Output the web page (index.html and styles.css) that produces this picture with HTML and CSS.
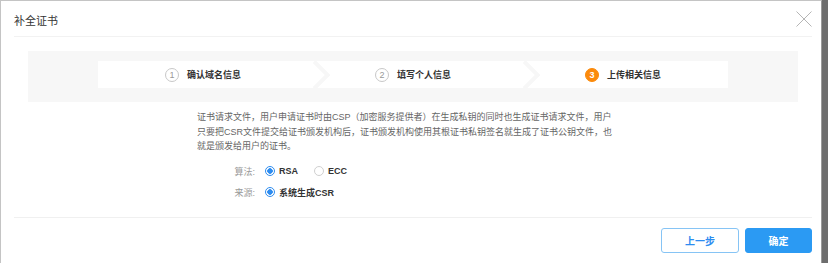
FILE: index.html
```html
<!DOCTYPE html>
<html lang="zh-CN">
<head>
    <meta charset="UTF-8">
    <title>补全证书</title>
    <link rel="stylesheet" href="styles.css">
</head>
<body>

<div class="dialog">
    <div class="dialogHeader">
        <span class="dialogTitle">补全证书</span>
        <span class="dialogClose">
            <svg width="16" height="16" viewBox="0 0 16 16">
                <path d="M0.5 0.5L15.5 15.5M15.5 0.5L0.5 15.5" stroke="#b5b5b5" stroke-width="1" fill="none"/>
            </svg>
        </span>
    </div>

    <div class="stepBox">
        <div class="steps">
            <div class="step">
                <span class="stepNum">1</span>
                <span class="stepName">确认域名信息</span>
            </div>
            <div class="step">
                <span class="stepNum">2</span>
                <span class="stepName">填写个人信息</span>
            </div>
            <div class="step active">
                <span class="stepNum">3</span>
                <span class="stepName">上传相关信息</span>
            </div>
        </div>
    </div>

    <p class="desc">证书请求文件，用户申请证书时由CSP（加密服务提供者）在生成私钥的同时也生成证书请求文件，用户只要把CSR文件提交给证书颁发机构后，证书颁发机构使用其根证书私钥签名就生成了证书公钥文件，也就是颁发给用户的证书。</p>

    <div class="form">
        <div class="formRow">
            <span class="formLabel">算法:</span>
            <label class="radioItem"><span class="radio checked"></span><span class="radioText">RSA</span></label>
            <label class="radioItem"><span class="radio"></span><span class="radioText">ECC</span></label>
        </div>
        <div class="formRow">
            <span class="formLabel">来源:</span>
            <label class="radioItem"><span class="radio checked"></span><span class="radioText">系统生成CSR</span></label>
        </div>
    </div>

    <div class="dialogFooter">
        <button class="btn btnGhost">上一步</button>
        <button class="btn btnPrimary">确定</button>
    </div>
</div>

</body>
</html>
```

FILE: styles.css
```css
body {
    margin: 0;
    background: #6d6d6d;
    font-family: "Liberation Sans", "Noto Sans CJK SC", sans-serif;
}

.dialog {
    box-sizing: border-box;
    width: 822px;
    height: 263px;
    padding: 0 9px 0 13px;
    background: #fff;
    border-top: 1px solid #c4c4c4;
    border-left: 1px solid #c4c4c4;
    border-right: 1px solid #9a9a9a;
    overflow: hidden;
}

.dialogHeader {
    display: flex;
    align-items: center;
    justify-content: space-between;
    height: 35px;
    border-bottom: 1px solid #f2f2f2;
}

.dialogTitle {
    font-size: 11px;
    color: #333;
    padding-top: 2px;
}

.dialogClose svg {
    display: block;
}

/*步骤条*/
.stepBox {
    margin: 14px 14px 0;
    padding: 10px 0 14px;
    background: #f7f7f7;
}

.steps {
    display: flex;
    width: 630px;
    height: 27px;
    margin: 0 auto;
    background: #fff;
    overflow: hidden;
}

.step {
    position: relative;
    flex: 1;
    display: flex;
    align-items: center;
    justify-content: center;
    gap: 8px;
}

.step + .step::before {
    content: "";
    position: absolute;
    left: -3px;
    top: 50%;
    width: 17px;
    height: 17px;
    border-top: 4px solid #f7f7f7;
    border-right: 4px solid #f7f7f7;
    transform: translateY(-50%) rotate(45deg);
}

.stepNum {
    box-sizing: border-box;
    display: flex;
    align-items: center;
    justify-content: center;
    width: 14px;
    height: 14px;
    border: 1px solid #c8c8c8;
    border-radius: 50%;
    font-size: 9px;
    color: #999;
}

.step.active .stepNum {
    border-color: #fb8a0b;
    background: #fb8a0b;
    color: #fff;
    font-weight: bold;
}

.stepName {
    font-size: 9px;
    font-weight: bold;
    color: #333;
}

.desc {
    width: 416px;
    margin: 8px 0 0 183px;
    font-size: 9px;
    line-height: 14.5px;
    color: #666;
}

.form {
    margin: 7px 0 0 183px;
}

.formRow {
    display: flex;
    align-items: center;
    height: 21px;
    font-size: 9px;
}

.formLabel {
    width: 58px;
    text-align: right;
    color: #999;
    margin-right: 10px;
}

.radioItem {
    display: flex;
    align-items: center;
    gap: 4px;
    margin-right: 16px;
}

.radio {
    box-sizing: border-box;
    width: 10px;
    height: 10px;
    border: 1px solid #d0d0d0;
    border-radius: 50%;
    background: #fff;
}

.radio.checked {
    border-color: #2d8cf0;
    background: radial-gradient(circle, #2d8cf0 0, #2d8cf0 2.5px, #fff 3px);
}

.radioText {
    font-weight: bold;
    color: #333;
}

.dialogFooter {
    display: flex;
    justify-content: flex-end;
    gap: 6px;
    margin-top: 14px;
    padding-top: 10px;
    border-top: 1px solid #f0f0f0;
}

.btn {
    height: 25px;
    border-radius: 3px;
    font-family: "Liberation Sans", "Noto Sans CJK SC", sans-serif;
    font-size: 10px;
    font-weight: bold;
    cursor: pointer;
}

.btnGhost {
    width: 78px;
    border: 1px solid #86c4f5;
    background: #fff;
    color: #2d8cf0;
}

.btnPrimary {
    width: 67px;
    border: 1px solid #2b9af3;
    background: #2b9af3;
    color: #fff;
}
```
